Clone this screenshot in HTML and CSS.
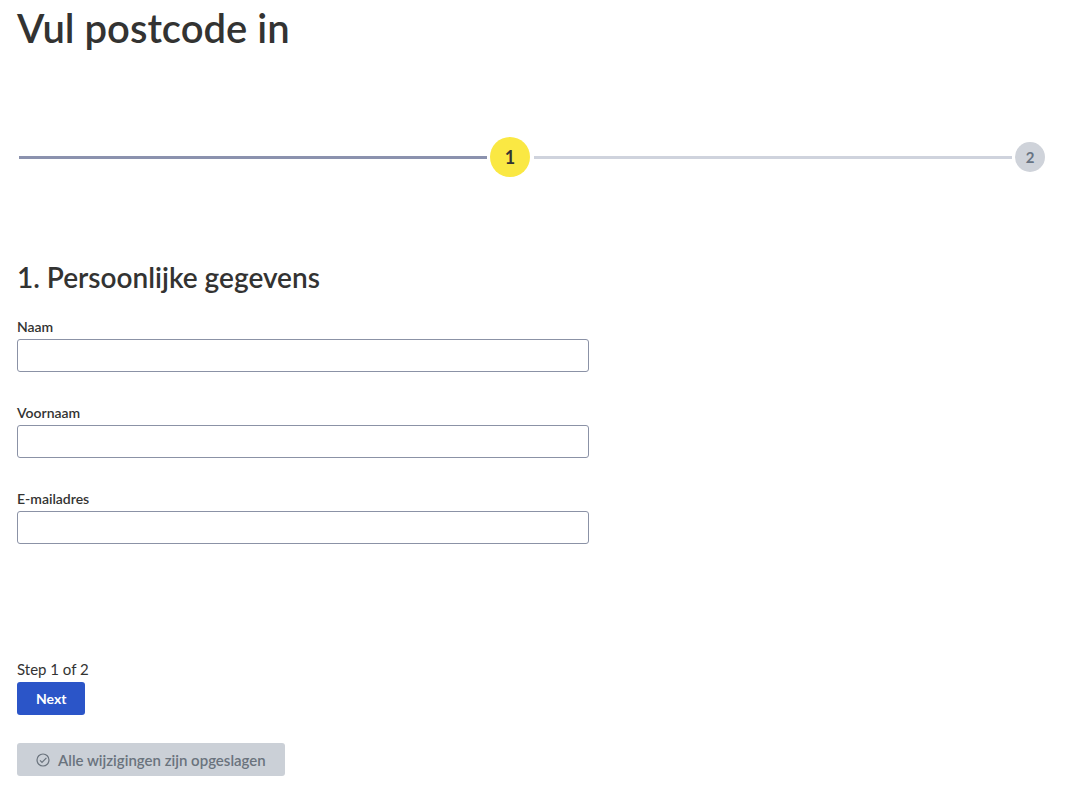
FILE: index.html
```
<!DOCTYPE html>
<html lang="nl">
<head>
  <meta charset="utf-8">
  <meta name="viewport" content="width=device-width, initial-scale=1">
  <title>Vul postcode in</title>
  <link rel="stylesheet" href="styles.css">
</head>
<body>
  <h1>Vul postcode in</h1>
  <ol class="steps">
    <li class="step step--active"><span class="step__number">1</span></li>
    <li class="step"><span class="step__number">2</span></li>
  </ol>
  <form class="form">
    <h2>1. Persoonlijke gegevens</h2>
    <div class="field">
      <label for="naam">Naam</label>
      <input type="text" id="naam" name="naam">
    </div>
    <div class="field">
      <label for="voornaam">Voornaam</label>
      <input type="text" id="voornaam" name="voornaam">
    </div>
    <div class="field">
      <label for="email">E-mailadres</label>
      <input type="email" id="email" name="email">
    </div>
    <p class="progress">Step 1 of 2</p>
    <button type="button" class="button">Next</button>
    <button type="button" class="button button--saved" disabled>
      <svg class="icon" viewBox="0 0 14 14" aria-hidden="true">
        <circle cx="7" cy="7" r="6"/>
        <path d="M4 7.4l2 2L10.4 4.8"/>
      </svg>
      Alle wijzigingen zijn opgeslagen
    </button>
  </form>
</body>
</html>
```
FILE: styles.css
```
* {
  box-sizing: border-box;
}

body {
  margin: 0;
  padding: 4px 26px 16px 17px;
  font-family: Lato, "Open Sans", sans-serif;
  font-size: 15px;
  line-height: 24px;
  color: #333332;
  background: #fff;
}

h1 {
  margin: 0 0 84px;
  font-size: 40px;
  font-weight: 600;
  line-height: 48px;
}

h2 {
  margin: 0 0 20px;
  font-size: 28px;
  font-weight: 600;
  line-height: 36px;
}

.steps {
  display: flex;
  height: 42px;
  margin: 0 0 81px;
  padding: 0 0 0 2px;
  list-style: none;
}

.step {
  display: flex;
  flex: 1;
  align-items: center;
  gap: 3px;
  font-weight: 700;
}

.step::before {
  content: "";
  flex: 1;
  height: 3px;
  background: #cfd3dd;
}

.step + .step {
  margin-left: 4px;
}

.step__number {
  width: 30px;
  height: 30px;
  border-radius: 50%;
  line-height: 30px;
  text-align: center;
  color: #687483;
  background: #cfd3da;
}

.step--active::before {
  background: #8b92ae;
}

.step--active .step__number {
  width: 40px;
  height: 40px;
  font-size: 18px;
  line-height: 40px;
  color: #333332;
  background: #fae843;
}

.field {
  max-width: 572px;
  margin-bottom: 29px;
}

.field label {
  display: block;
  font-size: 14px;
  font-weight: 600;
}

.field input {
  display: block;
  width: 100%;
  height: 33px;
  padding: 0 10px;
  border: 1px solid #8b92a6;
  border-radius: 3px;
  font: inherit;
}

.progress {
  margin: 113px 0 1px;
}

.button {
  display: flex;
  align-items: center;
  height: 33px;
  padding: 0 19px;
  border: 0;
  border-radius: 3px;
  font: 700 14px/24px Lato, "Open Sans", sans-serif;
  color: #fff;
  background: #2b55c8;
}

.button--saved {
  gap: 8px;
  margin-top: 28px;
  font-size: 15px;
  font-weight: 600;
  color: #6a737d;
  background: #cbd0d7;
}

.icon {
  width: 14px;
  height: 14px;
  fill: none;
  stroke: currentColor;
  stroke-width: 1.2;
}
```
